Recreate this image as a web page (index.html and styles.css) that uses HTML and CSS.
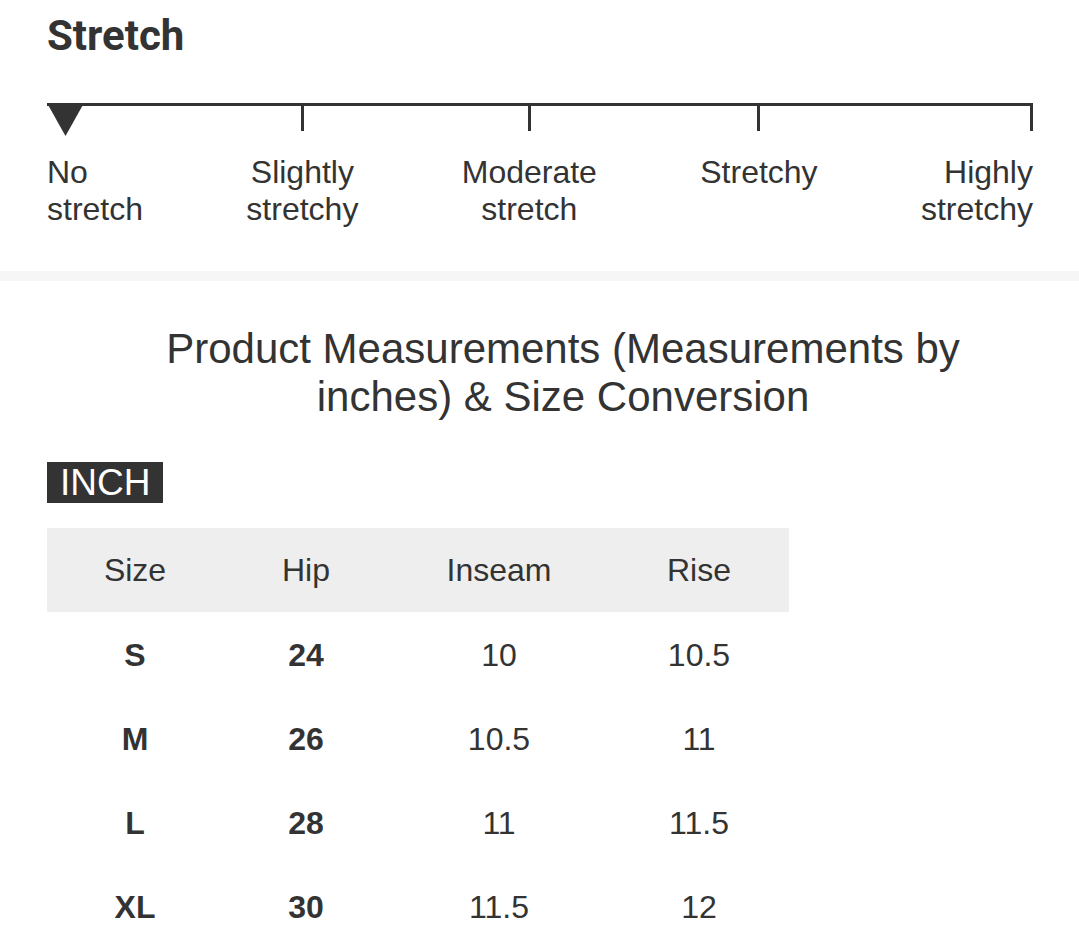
FILE: index.html
```html
<!DOCTYPE html>
<html lang="en">
<head>
<meta charset="utf-8">
<title>Stretch &amp; Size</title>
<link rel="stylesheet" href="styles.css">
</head>
<body>
<section class="stretch">
  <h2 class="stretch-title">Stretch</h2>
  <div class="scale">
    <div class="stop stop-first">
      <span class="marker"></span>
      <span class="label">No<br>stretch</span>
    </div>
    <div class="stop">
      <span class="tick"></span>
      <span class="label">Slightly<br>stretchy</span>
    </div>
    <div class="stop">
      <span class="tick"></span>
      <span class="label">Moderate<br>stretch</span>
    </div>
    <div class="stop">
      <span class="tick"></span>
      <span class="label">Stretchy</span>
    </div>
    <div class="stop stop-last">
      <span class="tick"></span>
      <span class="label">Highly<br>stretchy</span>
    </div>
  </div>
</section>
<div class="divider"></div>
<section class="measure">
  <h3 class="measure-title">Product Measurements (Measurements by inches) &amp; Size Conversion</h3>
  <div class="unit">INCH</div>
  <table class="size-table">
    <colgroup>
      <col class="c1"><col class="c2"><col class="c3"><col class="c4">
    </colgroup>
    <thead>
      <tr><th>Size</th><th>Hip</th><th>Inseam</th><th>Rise</th></tr>
    </thead>
    <tbody>
      <tr><td class="b">S</td><td class="b">24</td><td>10</td><td>10.5</td></tr>
      <tr><td class="b">M</td><td class="b">26</td><td>10.5</td><td>11</td></tr>
      <tr><td class="b">L</td><td class="b">28</td><td>11</td><td>11.5</td></tr>
      <tr><td class="b">XL</td><td class="b">30</td><td>11.5</td><td>12</td></tr>
    </tbody>
  </table>
</section>
</body>
</html>
```
FILE: styles.css
```css
html, body {
  margin: 0;
  padding: 0;
  background: #ffffff;
  color: #333333;
  font-family: "Liberation Sans", Arial, sans-serif;
}

.stretch {
  padding: 12px 46px 43px 47px;
}

.stretch-title {
  margin: 0;
  font-family: Roboto, "Liberation Sans", sans-serif;
  font-weight: 700;
  font-size: 42px;
  line-height: 48px;
  color: #333333;
}

.scale {
  margin-top: 43px;
  border-top: 3px solid #333333;
  display: flex;
  justify-content: space-between;
}

.stop {
  display: flex;
  flex-direction: column;
  align-items: center;
  text-align: center;
}

.stop-first {
  align-items: flex-start;
  text-align: left;
}

.stop-last {
  align-items: flex-end;
  text-align: right;
}

.tick {
  display: block;
  width: 3px;
  height: 25px;
  background: #333333;
}

.marker {
  display: block;
  width: 37px;
  height: 33px;
  margin-top: -3px;
  margin-bottom: -5px;
  background: #333333;
  clip-path: polygon(0 0, 100% 0, 50% 100%);
}

.label {
  display: block;
  margin-top: 23px;
  font-size: 32px;
  line-height: 37px;
  color: #333333;
}

.divider {
  height: 10px;
  background: #f6f6f6;
}

.measure {
  padding: 44px 0 0 47px;
}

.measure-title {
  margin: 0 auto;
  max-width: 830px;
  text-align: center;
  font-weight: 400;
  font-size: 42px;
  line-height: 48px;
  color: #333333;
}

.unit {
  display: inline-block;
  margin-top: 41px;
  padding: 0 13px;
  background: #333333;
  color: #ffffff;
  font-size: 37px;
  line-height: 41px;
}

.size-table {
  display: table;
  margin-top: 25px;
  width: 742px;
  border-collapse: collapse;
  table-layout: fixed;
}

.c1 { width: 176px; }
.c2 { width: 166px; }
.c3 { width: 220px; }
.c4 { width: 180px; }

.size-table th,
.size-table td {
  box-sizing: border-box;
  height: 84px;
  padding: 0;
  text-align: center;
  vertical-align: middle;
  font-size: 32px;
  color: #333333;
}

.size-table th {
  font-weight: 400;
  background: #eeeeee;
}

.size-table td {
  padding-top: 2px;
}

.size-table td.b {
  font-weight: 700;
}
```
